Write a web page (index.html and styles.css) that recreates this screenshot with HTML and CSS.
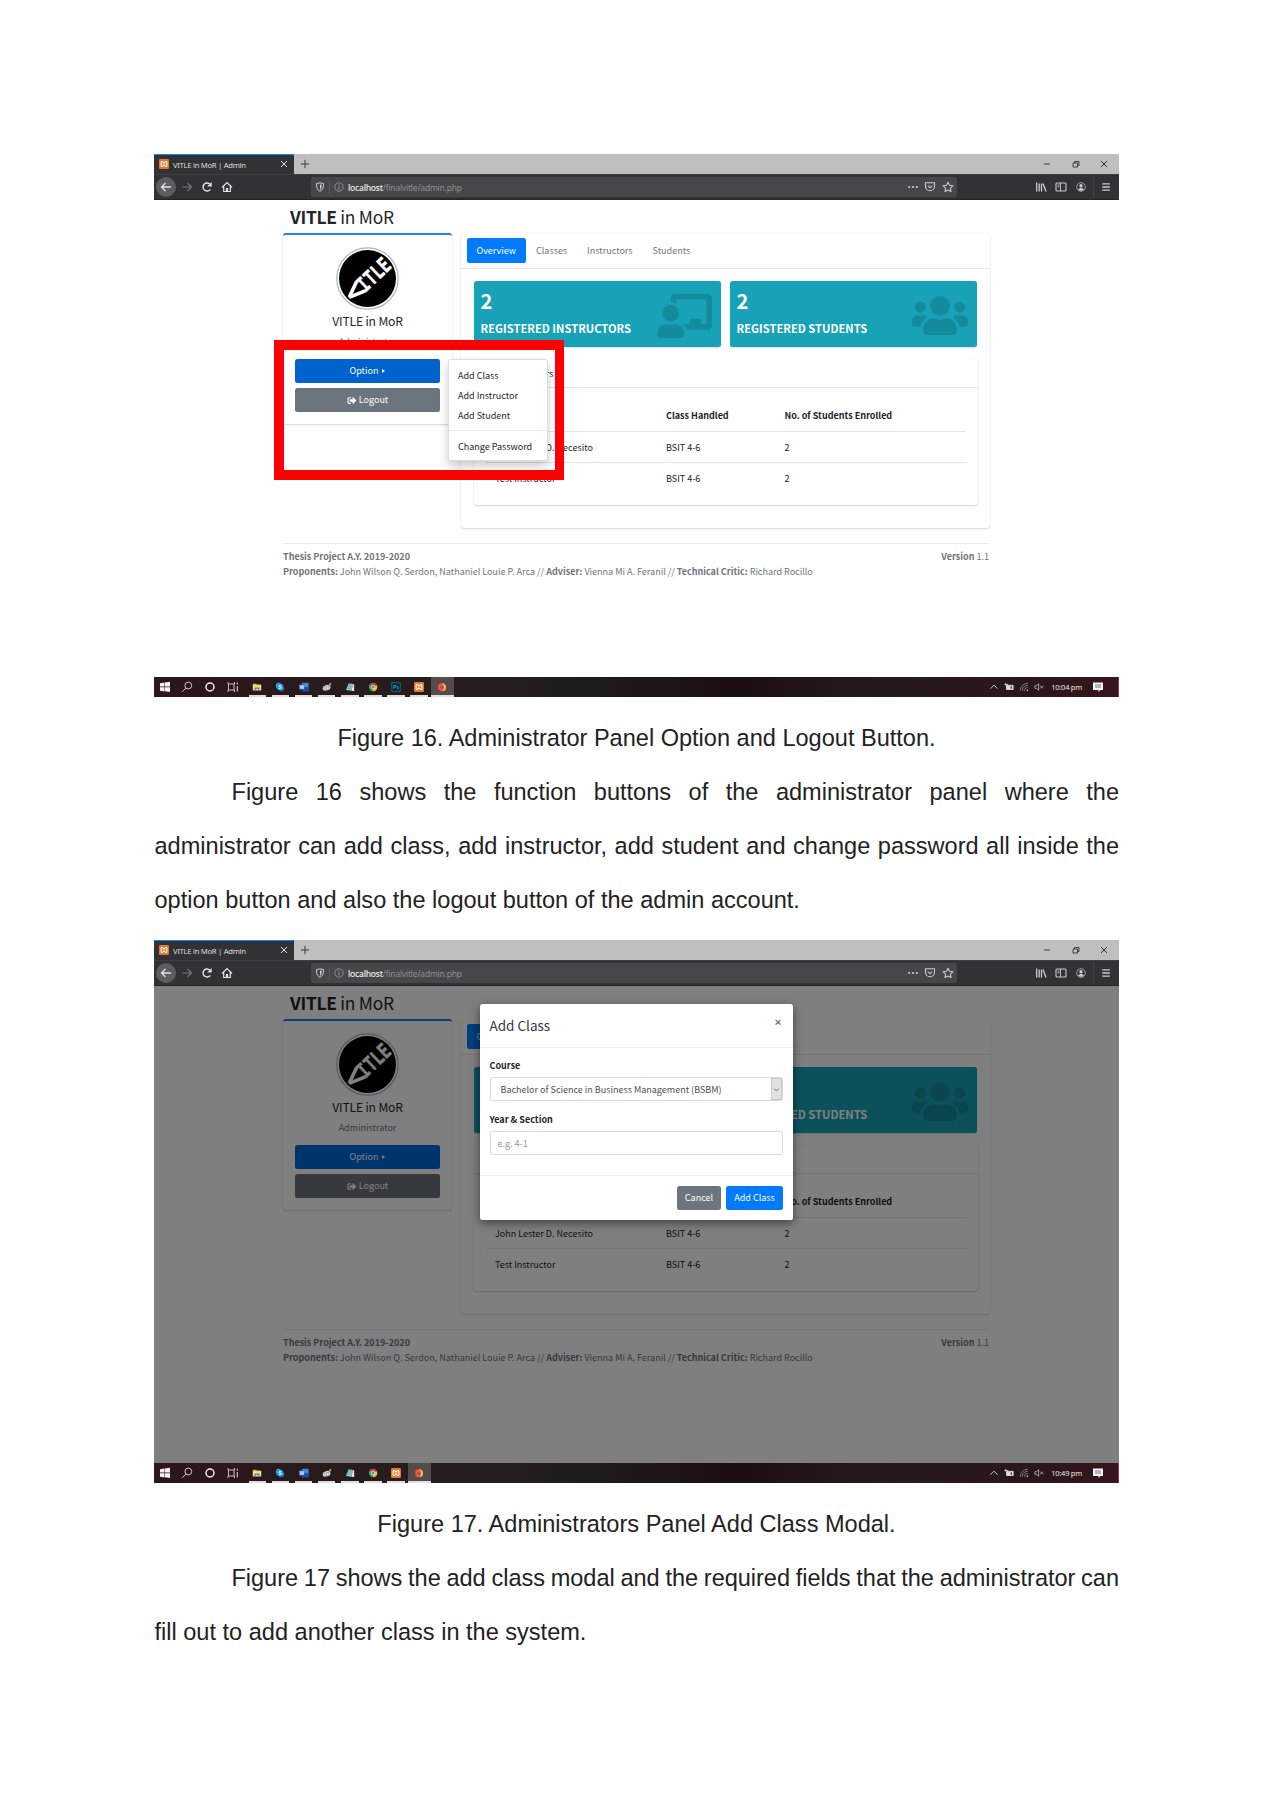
FILE: index.html
```html
<!DOCTYPE html>
<html lang="en">
<head>
<meta charset="utf-8">
<title>Administrator Panel</title>
<link rel="stylesheet" href="styles.css">
</head>
<body>
<svg class="defs" aria-hidden="true">
  <symbol id="xampp" viewBox="0 0 10 10"><rect width="10" height="10" rx="1.2" fill="#e8772e"/><path d="M2.200 3.200c0-1 1.300-1 2 0l.8.9.8-.9c.7-1 2-1 2 0v3.600c0 1-1.300 1-2 0L5 5.900l-.8.9c-.7 1-2 1-2 0z" fill="none" stroke="#fff" stroke-width="1.100"/></symbol>
  <symbol id="close" viewBox="0 0 10 10"><path d="M2 2l6 6M8 2L2 8" fill="none" stroke="currentColor" stroke-width="1"/></symbol>
  <symbol id="plus" viewBox="0 0 10 10"><path d="M5 .8v8.400M.8 5h8.400" fill="none" stroke="#3c3c3c" stroke-width="1"/></symbol>
  <symbol id="min" viewBox="0 0 10 10"><path d="M2 5h6" stroke="#333" stroke-width=".9"/></symbol>
  <symbol id="restore" viewBox="0 0 10 10"><path d="M2 4h4.500v4H2zM3.500 4V2.500H8v4H6.500" fill="none" stroke="#333" stroke-width=".9"/></symbol>
  <symbol id="back" viewBox="0 0 12 12"><path d="M11 6H1.800M5.500 2L1.500 6l4 4" fill="none" stroke="#e4e4e4" stroke-width="1.300"/></symbol>
  <symbol id="fwd" viewBox="0 0 12 12"><path d="M1 6h9.200M6.500 2l4 4-4 4" fill="none" stroke="#77777a" stroke-width="1.200"/></symbol>
  <symbol id="reload" viewBox="0 0 12 12"><path d="M9.300 8.300A4 4 0 1 1 9 3.300" fill="none" stroke="#e4e4e4" stroke-width="1.400"/><path d="M10.700 1v4.500H6.200z" fill="#e4e4e4"/></symbol>
  <symbol id="home" viewBox="0 0 12 12"><path d="M1 6.500L6 1.500l5 5M2.700 5.500v5h6.600v-5" fill="none" stroke="#e4e4e4" stroke-width="1.200"/><path d="M4.900 7h2.200v3.500H4.900z" fill="#e4e4e4"/></symbol>
  <symbol id="shield" viewBox="0 0 10 10"><path d="M1.500 1.500Q5 .3 8.500 1.500C8.700 5.500 7.700 8 5 9.400 2.300 8 1.300 5.500 1.500 1.500z" fill="none" stroke="#ccc" stroke-width="1"/><path d="M5 2.500l1.800.3C6.800 5.500 6.300 6.800 5 7.800z" fill="#ccc"/></symbol>
  <symbol id="info" viewBox="0 0 10 10"><circle cx="5" cy="5" r="4.200" fill="none" stroke="#a0a0a2" stroke-width=".8"/><path d="M5 4.300v3.200M5 2.500v1" stroke="#a0a0a2" stroke-width="1"/></symbol>
  <symbol id="dots" viewBox="0 0 10 10"><circle cx="1.200" cy="5" r="1.100" fill="#ccc"/><circle cx="5" cy="5" r="1.100" fill="#ccc"/><circle cx="8.800" cy="5" r="1.100" fill="#ccc"/></symbol>
  <symbol id="pocket" viewBox="0 0 12 12"><path d="M1.500 1.800h9v3.500a4.500 4.500 0 0 1-9 0z" fill="none" stroke="#ccc" stroke-width="1.100"/><path d="M3.800 4.600L6 6.800l2.200-2.200" fill="none" stroke="#ccc" stroke-width="1.100"/></symbol>
  <symbol id="star" viewBox="0 0 12 12"><path d="M6 1.200l1.500 3.100 3.400.5-2.500 2.400.6 3.400L6 9l-3 1.600.6-3.400L1.100 4.800l3.400-.5z" fill="none" stroke="#ccc" stroke-width="1.100" stroke-linejoin="round"/></symbol>
  <symbol id="library" viewBox="0 0 12 12"><path d="M1.700 1.500v9M4.200 2.500v8M6.500 2.500v8M8 2.500l3 8" fill="none" stroke="#ccc" stroke-width="1.300"/></symbol>
  <symbol id="sidebar" viewBox="0 0 12 12"><rect x="1" y="2" width="10" height="8" rx="1" fill="none" stroke="#ccc" stroke-width="1.100"/><path d="M5.500 2v8M2.500 4h2M2.500 5.800h2" stroke="#ccc" stroke-width=".9"/></symbol>
  <symbol id="account" viewBox="0 0 12 12"><circle cx="6" cy="6" r="4.300" fill="none" stroke="#aaa" stroke-width=".9"/><circle cx="6" cy="4.700" r="1.700" fill="#ccc"/><path d="M3 8.500q3-3.500 6 0Q6 11 3 8.500z" fill="#ccc"/></symbol>
  <symbol id="menu" viewBox="0 0 10 10"><path d="M1.200 1.800h7.600M1.200 5h7.600M1.200 8.200h7.600" stroke="#ccc" stroke-width="1.300"/></symbol>
  <symbol id="logo" viewBox="0 0 63 63">
    <circle cx="31.500" cy="31.500" r="30.700" fill="#fff" stroke="#adb5bd" stroke-width="1.200"/>
    <circle cx="31.500" cy="31.500" r="28.500" fill="#000"/>
    <g transform="translate(12.500 51) rotate(-43.500)">
      <path d="M1 0L17-6.300M1 0L17 6.300" fill="none" stroke="#fff" stroke-width="3.600"/>
      <path d="M0 0l5-2.300v4.600z" fill="#fff"/>
      <text x="15.500" y="7.800" textLength="38" lengthAdjust="spacingAndGlyphs" class="logo-text">ITLE</text>
    </g>
  </symbol>
  <symbol id="teacher" viewBox="0 0 640 512"><path d="M208 352c-2.390 0-4.780.35-7.060 1.090C187.980 357.300 174.350 360 160 360c-14.350 0-27.980-2.700-40.950-6.910-2.280-.74-4.660-1.090-7.050-1.090C49.940 352-.33 402.480 0 464.620.14 490.880 21.730 512 48 512h224c26.270 0 47.860-21.120 48-47.380.33-62.140-49.940-112.620-112-112.620zm-48-32c53.020 0 96-42.980 96-96s-42.980-96-96-96-96 42.980-96 96 42.980 96 96 96zM592 0H208c-26.470 0-48 22.250-48 49.590V96c23.420 0 45.100 6.780 64 17.800V64h352v288h-64v-64H384v64h-76.240c19.100 16.690 33.120 38.730 39.690 64H592c26.470 0 48-22.250 48-49.590V49.590C640 22.250 618.470 0 592 0z"/></symbol>
  <symbol id="users" viewBox="0 0 640 512"><path d="M96 224c35.300 0 64-28.700 64-64s-28.700-64-64-64-64 28.700-64 64 28.700 64 64 64zm448 0c35.300 0 64-28.700 64-64s-28.700-64-64-64-64 28.700-64 64 28.700 64 64 64zm32 32h-64c-17.600 0-33.500 7.100-45.100 18.600 40.300 22.100 68.900 62 75.100 109.400h66c17.700 0 32-14.300 32-32v-32c0-35.300-28.700-64-64-64zm-256 0c61.900 0 112-50.100 112-112S381.900 32 320 32 208 82.100 208 144s50.100 112 112 112zm76.800 32h-8.300c-20.800 10-43.900 16-68.500 16s-47.600-6-68.500-16h-8.300C179.600 288 128 339.600 128 403.200V432c0 26.500 21.500 48 48 48h288c26.500 0 48-21.500 48-48v-28.800c0-63.600-51.600-115.200-115.200-115.200zm-223.700-13.400C161.500 263.100 145.600 256 128 256H64c-35.300 0-64 28.700-64 64v32c0 17.700 14.300 32 32 32h65.900c6.300-47.400 34.900-87.300 75.200-109.400z"/></symbol>
  <symbol id="signout" viewBox="0 0 512 512"><path fill="currentColor" d="M497 273L329 441c-15 15-41 4.500-41-17v-96H152c-13.300 0-24-10.700-24-24v-96c0-13.300 10.700-24 24-24h136V88c0-21.400 25.900-32 41-17l168 168c9.300 9.400 9.300 24.600 0 34zM192 436v-40c0-6.600-5.400-12-12-12H96c-17.700 0-32-14.300-32-32V160c0-17.700 14.300-32 32-32h84c6.600 0 12-5.400 12-12V76c0-6.600-5.400-12-12-12H96c-53 0-96 43-96 96v192c0 53 43 96 96 96h84c6.600 0 12-5.400 12-12z"/></symbol>
  <symbol id="win" viewBox="0 0 12 12"><path d="M1 2.300L5.500 1.600v4H1zM6 1.500L11 .8v4.800H6zM1 6.200h4.500v4.200L1 9.700zM6 6.200h5V11l-5-.7z" fill="#f4f4f4"/></symbol>
  <symbol id="search" viewBox="0 0 12 12"><circle cx="7.300" cy="4.500" r="3.400" fill="none" stroke="#ddd" stroke-width=".9"/><path d="M5 7L1.200 10.800" stroke="#ddd" stroke-width=".9"/></symbol>
  <symbol id="cortana" viewBox="0 0 12 12"><circle cx="6" cy="6" r="4" fill="none" stroke="#f0f0f0" stroke-width="1.500"/></symbol>
  <symbol id="taskview" viewBox="0 0 12 12"><path d="M1 1v2h6.500V1M1 11V9h6.500v2M1.500 3v6M7 3v6" fill="none" stroke="#d0d0d0" stroke-width=".9"/><path d="M10.300 1.500v2M10.300 5v5.500" stroke="#d0d0d0" stroke-width="1.100"/></symbol>
  <symbol id="folder" viewBox="0 0 12 12"><path d="M1 2h4l1 1h5v7H1z" fill="#e9b93a"/><path d="M1 4h10v6H1z" fill="#fbdc7a"/><path d="M3 6.500h6V10H7.500V8.500h-3V10H3z" fill="#3d8fd1"/></symbol>
  <symbol id="skype" viewBox="0 0 12 12"><circle cx="4.500" cy="4.500" r="3.500" fill="#28a8ea"/><circle cx="7.500" cy="7.500" r="3.500" fill="#0f78d4"/><circle cx="6" cy="6" r="4" fill="#1a9be3"/><text x="6" y="8.200" text-anchor="middle" class="glyph">S</text></symbol>
  <symbol id="word" viewBox="0 0 12 12"><rect x="3.500" y="1" width="8" height="10" fill="#3f8fe0"/><rect x="3.500" y="6" width="8" height="5" fill="#174ea6"/><rect x="0" y="3" width="7" height="6.500" fill="#1a57b5"/><text x="3.500" y="8.200" text-anchor="middle" class="glyph">W</text></symbol>
  <symbol id="paint" viewBox="0 0 12 12"><ellipse cx="5.500" cy="7" rx="4.800" ry="3.200" fill="#cfd6d8" transform="rotate(-20 5.500 7)"/><path d="M6 6l4-5 1.500 1L8 7z" fill="#b9a383"/><circle cx="3" cy="7" r=".8" fill="#4b8bbd"/><circle cx="5" cy="5.500" r=".7" fill="#6da05f"/><circle cx="5" cy="8.700" r=".7" fill="#555"/></symbol>
  <symbol id="notepad" viewBox="0 0 12 12"><path d="M4.500 1.500l5.500 1L7.500 10.500l-6.500-1z" fill="#8fc3d0"/><path d="M10 2.500l1 .8v7.500l-3.500-.3z" fill="#e4edf0"/><path d="M4.500 3.500l4 .7M4 5.500l4 .7M3 7.500l4 .7" stroke="#4c8795" stroke-width=".5"/></symbol>
  <symbol id="chrome" viewBox="0 0 12 12"><circle cx="6" cy="6" r="5" fill="#3aa757"/><path d="M6 6L1.700 3.500A5 5 0 0 1 10.500 4z" fill="#e33b2e"/><path d="M6 6l4.600-2.200A5 5 0 0 1 6 11z" fill="#fbc116"/><circle cx="6" cy="6" r="2.400" fill="#fff"/><circle cx="6" cy="6" r="1.800" fill="#4285f4"/></symbol>
  <symbol id="ps" viewBox="0 0 12 12"><rect x="1" y="1" width="10" height="10" fill="#0a2230" stroke="#14839b" stroke-width=".9"/><text x="6" y="8.400" text-anchor="middle" class="glyph ps">Ps</text></symbol>
  <symbol id="firefox" viewBox="0 0 12 12"><circle cx="6" cy="6.300" r="4.800" fill="#ff5a2b"/><path d="M6.500.8c3 1.500 4.500 3.500 4.300 6-.3 2.500-2.300 4-4 4.200C9 8.500 9 4.500 6.500.8z" fill="#ffc531"/><path d="M1.400 4.500C1.500 9 4 11 7 11c-4 .5-6.500-3-5.600-6.500z" fill="#e21f62"/><circle cx="5.800" cy="6.500" r="1.700" fill="#7543d8"/></symbol>
  <symbol id="caret" viewBox="0 0 12 12"><path d="M1.800 8L6 3.800 10.200 8" fill="none" stroke="#ddd" stroke-width="1.100"/></symbol>
  <symbol id="battery" viewBox="0 0 12 12"><path d="M3 4h8v5H3z" fill="#ddd" stroke="#ddd"/><path d="M.5 3h4.500M2 1.200v3" stroke="#ddd"/><path d="M8 5h1.500v3H8z" fill="#333"/></symbol>
  <symbol id="wifi" viewBox="0 0 12 12"><path d="M1.500 10.500A9 9 0 0 1 10.500 1.500M4 10.500a6.500 6.500 0 0 1 6.500-6.500M6.500 10.500A4 4 0 0 1 10.500 6.500" fill="none" stroke="#999" stroke-width=".9"/><circle cx="10" cy="10" r="1" fill="#ccc"/></symbol>
  <symbol id="volume" viewBox="0 0 12 12"><path d="M1 4.500h2L5.500 2v8L3 7.500H1z" fill="none" stroke="#ccc" stroke-width=".9"/><path d="M7.500 4.300l3.400 3.400M10.900 4.300L7.500 7.700" stroke="#ccc" stroke-width=".9"/></symbol>
  <symbol id="notify" viewBox="0 0 12 12"><path d="M1 1.500h10v7.500H8.500L6.500 11V9H1z" fill="#f6f6f6"/><path d="M3 4h6M3 6h6" stroke="#555" stroke-width=".8"/></symbol>
</svg>

<main class="page">
  <section class="shot">
    <div class="tabstrip">
      <div class="tab"><svg class="i10"><use href="#xampp"/></svg><span>VITLE in MoR | Admin</span><svg class="i10"><use href="#close"/></svg></div>
      <svg class="i10 newtab"><use href="#plus"/></svg>
      <div class="wincontrols"><svg class="i10"><use href="#min"/></svg><svg class="i10"><use href="#restore"/></svg><svg class="i10"><use href="#close"/></svg></div>
    </div>
    <div class="navbar">
      <div class="navbtns"><span class="backbtn"><svg class="i12"><use href="#back"/></svg></span><svg class="i12"><use href="#fwd"/></svg><svg class="i12"><use href="#reload"/></svg><svg class="i12"><use href="#home"/></svg></div>
      <div class="urlbar"><svg class="i10"><use href="#shield"/></svg><i class="sep"></i><svg class="i10"><use href="#info"/></svg><span class="url"><b>localhost</b>/finalvitle/admin.php</span><span class="urlicons"><svg class="i10"><use href="#dots"/></svg><svg class="i12"><use href="#pocket"/></svg><svg class="i12"><use href="#star"/></svg></span></div>
      <div class="tools"><svg class="i12"><use href="#library"/></svg><svg class="i12"><use href="#sidebar"/></svg><svg class="i12"><use href="#account"/></svg><i class="sep tall"></i><svg class="i10"><use href="#menu"/></svg></div>
    </div>
    <div class="viewport">
      <h1 class="brand"><b>VITLE</b> in MoR</h1>
      <div class="cols">
        <aside class="card profile">
          <svg class="avatar"><use href="#logo"/></svg>
          <div class="name">VITLE in MoR</div>
          <div class="role">Administrator</div>
          <div class="btn primary pressed">Option <i class="tri"></i></div>
          <div class="btn grey"><svg class="out"><use href="#signout"/></svg> Logout</div>
        </aside>
        <div class="card panel">
          <nav class="pills"><span class="pill on">Overview</span><span class="pill">Classes</span><span class="pill">Instructors</span><span class="pill">Students</span></nav>
          <div class="body">
            <div class="boxes">
              <div class="box"><div><b class="num">2</b><b class="lbl">REGISTERED INSTRUCTORS</b></div><svg class="teach"><use href="#teacher"/></svg></div>
              <div class="box"><div><b class="num">2</b><b class="lbl">REGISTERED STUDENTS</b></div><svg class="usr"><use href="#users"/></svg></div>
            </div>
            <div class="card inner">
              <div class="innerhead">Active Instructors</div>
              <div class="table">
                <div class="tr th"><span>Name</span><span>Class Handled</span><span>No. of Students Enrolled</span></div>
                <div class="tr"><span>John Lester D. Necesito</span><span>BSIT 4-6</span><span>2</span></div>
                <div class="tr"><span>Test Instructor</span><span>BSIT 4-6</span><span>2</span></div>
              </div>
            </div>
          </div>
        </div>
      </div>
      <footer class="foot">
        <div class="footrow"><b>Thesis Project A.Y. 2019-2020</b><span><b>Version</b> 1.1</span></div>
        <div class="credits"><b>Proponents:</b> John Wilson Q. Serdon, Nathaniel Louie P. Arca // <b>Adviser:</b> Vienna Mi A. Feranil // <b>Technical Critic:</b> Richard Rocillo</div>
      </footer>
      <div class="dropdown"><span>Add Class</span><span>Add Instructor</span><span>Add Student</span><hr><span>Change Password</span></div>
      <div class="highlight"></div>
    </div>
    <div class="taskbar">
      <svg class="i12"><use href="#win"/></svg><svg class="i12"><use href="#search"/></svg><svg class="i12"><use href="#cortana"/></svg><svg class="i12"><use href="#taskview"/></svg>
      <div class="apps"><span><svg class="i10"><use href="#folder"/></svg></span><span><svg class="i10"><use href="#skype"/></svg></span><span><svg class="i10"><use href="#word"/></svg></span><span><svg class="i10"><use href="#paint"/></svg></span><span><svg class="i10"><use href="#notepad"/></svg></span><span><svg class="i10"><use href="#chrome"/></svg></span><span><svg class="i10"><use href="#ps"/></svg></span><span><svg class="i10"><use href="#xampp"/></svg></span><span class="current"><svg class="i10"><use href="#firefox"/></svg></span></div>
      <div class="tray"><svg class="i10"><use href="#caret"/></svg><svg class="i10"><use href="#battery"/></svg><svg class="i10"><use href="#wifi"/></svg><svg class="i10"><use href="#volume"/></svg><span class="time">10:04 pm</span><svg class="i12"><use href="#notify"/></svg></div>
    </div>
  </section>

  <p class="caption">Figure 16. Administrator Panel Option and Logout Button.</p>
  <p class="para"><span class="full indent">Figure 16 shows the function buttons of the administrator panel where the</span><span class="full">administrator can add class, add instructor, add student and change password all inside the</span><span>option button and also the logout button of the admin account.</span></p>

  <section class="shot second">
    <div class="tabstrip">
      <div class="tab"><svg class="i10"><use href="#xampp"/></svg><span>VITLE in MoR | Admin</span><svg class="i10"><use href="#close"/></svg></div>
      <svg class="i10 newtab"><use href="#plus"/></svg>
      <div class="wincontrols"><svg class="i10"><use href="#min"/></svg><svg class="i10"><use href="#restore"/></svg><svg class="i10"><use href="#close"/></svg></div>
    </div>
    <div class="navbar">
      <div class="navbtns"><span class="backbtn"><svg class="i12"><use href="#back"/></svg></span><svg class="i12"><use href="#fwd"/></svg><svg class="i12"><use href="#reload"/></svg><svg class="i12"><use href="#home"/></svg></div>
      <div class="urlbar"><svg class="i10"><use href="#shield"/></svg><i class="sep"></i><svg class="i10"><use href="#info"/></svg><span class="url"><b>localhost</b>/finalvitle/admin.php</span><span class="urlicons"><svg class="i10"><use href="#dots"/></svg><svg class="i12"><use href="#pocket"/></svg><svg class="i12"><use href="#star"/></svg></span></div>
      <div class="tools"><svg class="i12"><use href="#library"/></svg><svg class="i12"><use href="#sidebar"/></svg><svg class="i12"><use href="#account"/></svg><i class="sep tall"></i><svg class="i10"><use href="#menu"/></svg></div>
    </div>
    <div class="viewport">
      <h1 class="brand"><b>VITLE</b> in MoR</h1>
      <div class="cols">
        <aside class="card profile">
          <svg class="avatar"><use href="#logo"/></svg>
          <div class="name">VITLE in MoR</div>
          <div class="role">Administrator</div>
          <div class="btn primary">Option <i class="tri"></i></div>
          <div class="btn grey"><svg class="out"><use href="#signout"/></svg> Logout</div>
        </aside>
        <div class="card panel">
          <nav class="pills"><span class="pill on">Overview</span><span class="pill">Classes</span><span class="pill">Instructors</span><span class="pill">Students</span></nav>
          <div class="body">
            <div class="boxes">
              <div class="box"><div><b class="num">2</b><b class="lbl">REGISTERED INSTRUCTORS</b></div><svg class="teach"><use href="#teacher"/></svg></div>
              <div class="box"><div><b class="num">2</b><b class="lbl">REGISTERED STUDENTS</b></div><svg class="usr"><use href="#users"/></svg></div>
            </div>
            <div class="card inner">
              <div class="innerhead">Active Instructors</div>
              <div class="table">
                <div class="tr th"><span>Name</span><span>Class Handled</span><span>No. of Students Enrolled</span></div>
                <div class="tr"><span>John Lester D. Necesito</span><span>BSIT 4-6</span><span>2</span></div>
                <div class="tr"><span>Test Instructor</span><span>BSIT 4-6</span><span>2</span></div>
              </div>
            </div>
          </div>
        </div>
      </div>
      <footer class="foot">
        <div class="footrow"><b>Thesis Project A.Y. 2019-2020</b><span><b>Version</b> 1.1</span></div>
        <div class="credits"><b>Proponents:</b> John Wilson Q. Serdon, Nathaniel Louie P. Arca // <b>Adviser:</b> Vienna Mi A. Feranil // <b>Technical Critic:</b> Richard Rocillo</div>
      </footer>
      <div class="backdrop">
        <div class="modal">
          <div class="mhead"><span>Add Class</span><b>×</b></div>
          <div class="mbody">
            <label>Course</label>
            <div class="field select"><span>Bachelor of Science in Business Management (BSBM)</span><i><svg viewBox="0 0 10 10"><path d="M2.500 4L5 6.500 7.500 4" fill="none" stroke="#555" stroke-width="1"/></svg></i></div>
            <label>Year &amp; Section</label>
            <div class="field input">e.g. 4-1</div>
          </div>
          <div class="mfoot"><span class="btn grey cancel">Cancel</span><span class="btn add">Add Class</span></div>
        </div>
      </div>
    </div>
    <div class="taskbar">
      <svg class="i12"><use href="#win"/></svg><svg class="i12"><use href="#search"/></svg><svg class="i12"><use href="#cortana"/></svg><svg class="i12"><use href="#taskview"/></svg>
      <div class="apps"><span><svg class="i10"><use href="#folder"/></svg></span><span><svg class="i10"><use href="#skype"/></svg></span><span><svg class="i10"><use href="#word"/></svg></span><span><svg class="i10"><use href="#paint"/></svg></span><span><svg class="i10"><use href="#notepad"/></svg></span><span><svg class="i10"><use href="#chrome"/></svg></span><span><svg class="i10"><use href="#xampp"/></svg></span><span class="current"><svg class="i10"><use href="#firefox"/></svg></span></div>
      <div class="tray"><svg class="i10"><use href="#caret"/></svg><svg class="i10"><use href="#battery"/></svg><svg class="i10"><use href="#wifi"/></svg><svg class="i10"><use href="#volume"/></svg><span class="time">10:49 pm</span><svg class="i12"><use href="#notify"/></svg></div>
    </div>
  </section>

  <p class="caption">Figure 17. Administrators Panel Add Class Modal.</p>
  <p class="para"><span class="full indent snug">Figure 17 shows the add class modal and the required fields that the administrator can</span><span>fill out to add another class in the system.</span></p>
</main>
</body>
</html>
```
FILE: styles.css
```css
* { box-sizing: border-box; }
body { margin: 0; background: #fff; }
svg { display: block; flex: none; }
.defs { position: absolute; width: 0; height: 0; }
.i10 { width: 10px; height: 10px; }
.i12 { width: 12px; height: 12px; }
.logo-text { font: bold 21px "DejaVu Sans Mono", monospace; fill: #fff; stroke: #fff; stroke-width: .5px; }
.glyph { font: bold 6px "Liberation Sans", sans-serif; fill: #fff; }
.glyph.ps { fill: #22a9c0; }

.page { width: 1272px; height: 1800px; padding: 154px 153px 0 154px; overflow: hidden; }

/* document text */
.caption, .para { margin: 0; font: 23.550px/54px "Liberation Sans", Arial, sans-serif; color: #222; white-space: nowrap; }
.caption { text-align: center; padding-top: 14px; }
.para { padding-left: .5px; }
.para span { display: block; }
.para .full { text-align-last: justify; }
.para .indent { padding-left: 77px; }
.para .snug { word-spacing: -1.500px; letter-spacing: -.03px; }

/* browser window frame */
.shot { width: 965px; height: 543px; display: flex; flex-direction: column; font: 9.030px/14px "Noto Sans CJK JP", "Noto Sans", sans-serif; color: #212529; white-space: nowrap; }
.second { margin-top: 13px; }

.tabstrip { height: 20px; background: #bfbfbf; display: flex; align-items: center; color: #333; }
.tab { width: 140px; height: 20px; background: #323234; border-top: 1px solid #0a84ff; display: flex; align-items: center; gap: 4px; padding: 0 5px; font: 7.700px/12px "Noto Sans", sans-serif; color: #ddd; letter-spacing: -.3px; }
.tab span { flex: 1; }
.tab > svg { position: relative; top: -.5px; }
.newtab { margin-left: 6px; }
.wincontrols { margin-left: auto; display: flex; gap: 18.500px; padding-right: 10px; }

.navbar { height: 26px; background: #323234; border-top: 1px solid #3f3f41; border-bottom: 1px solid #252526; display: flex; align-items: center; }
.navbtns { width: 157px; display: flex; align-items: center; gap: 8px; padding-left: 2px; }
.navbtns > svg:nth-child(2) { margin-left: -3px; }
.backbtn { width: 20px; height: 20px; border-radius: 50%; background: #5d5d5f; display: flex; align-items: center; justify-content: center; }
.urlbar { width: 646px; height: 20px; background: #474749; border-radius: 2px; display: flex; align-items: center; padding: 0 3px 0 4px; }
.sep { width: 1px; height: 13px; background: #5b5b5d; margin: 0 4px; }
.sep.tall { height: 22px; background: #414143; margin: 0 -1px 0 -2px; }
.url { margin-left: 4px; padding-top: 1px; font: 8.500px/14px "Noto Sans", sans-serif; color: #8f8f92; letter-spacing: -.22px; }
.url b { font-weight: 500; color: #f2f2f2; }
.urlicons { margin-left: auto; display: flex; align-items: center; gap: 6px; }
.tools { margin-left: auto; display: flex; align-items: center; gap: 8px; padding-right: 8px; }

.viewport { height: 477px; position: relative; background: #fff; }
.brand { margin: 0; height: 33px; padding-left: 136px; font-size: 17.400px; letter-spacing: -.28px; line-height: 33px; font-weight: 400; }
.cols { margin-left: 129px; display: flex; align-items: flex-start; gap: 9px; }
.card { background: #fff; border-radius: 3px; box-shadow: 0 0 1px rgba(0,0,0,.13), 0 1px 2px rgba(0,0,0,.16); }

.profile { width: 169px; height: 191px; border-top: 2px solid #2183e6; padding: 12px 12px 0; display: flex; flex-direction: column; align-items: center; }
.avatar { width: 63px; height: 63px; }
.name { font-size: 12.100px; letter-spacing: -.15px; line-height: 20px; margin-top: 1px; }
.role { color: #6c757d; line-height: 21px; }
.btn { height: 24px; border-radius: 2.500px; color: #fff; display: flex; align-items: center; justify-content: center; }
.profile .btn { width: 145px; white-space: pre; }
.primary { background: #0069d9; margin: 7px 0 5px; }
.pressed { background: #0062cc; }
.grey { background: #6c757d; }
.tri { border-left: 3px solid #fff; border-top: 2.500px solid transparent; border-bottom: 2.500px solid transparent; margin-left: 2px; }
.out { width: 10px; height: 9px; }

.panel { width: 528.500px; height: 295px; }
.pills { height: 36px; border-bottom: 1px solid #e4e6e8; display: flex; align-items: center; padding: 0 0 1px 5.500px; color: #6c757d; }
.pill { height: 25px; line-height: 26px; padding: 0 10px; border-radius: 2.500px; }
.pill.on { background: #007bff; color: #fff; }
.body { padding: 12px 12px 12px 12.500px; }
.boxes { display: flex; gap: 9px; height: 66px; }
.box { width: 247px; background: #17a2b8; border-radius: 2.500px; color: #fff; display: flex; justify-content: space-between; padding: 0 9px 0 7px; box-shadow: 0 1px 1px rgba(0,0,0,.12); }
.num { display: block; font-size: 20.200px; line-height: 24px; margin-top: 8px; }
.lbl { display: block; font-size: 11.200px; line-height: 14px; margin-top: 8px; }
.box svg { fill: #148a9d; }
.teach { width: 55px; height: 44px; margin-top: 13px; }
.usr { width: 56px; height: 45px; margin-top: 12px; }
.inner { height: 146px; margin-top: 12px; }
.innerhead { height: 29px; line-height: 30px; border-bottom: 1px solid #e4e6e8; width: 100%; padding-left: 7px; }
.table { padding: 12px; }
.tr { display: grid; grid-template-columns: 171px 118.500px 1fr; height: 31px; line-height: 31px; padding-left: 9.500px; }
.tr + .tr { border-top: 1px solid #e3e6e9; }
.th { font-weight: 700; line-height: 32px; }

.foot { margin: 15px 0 0 129px; width: 706px; border-top: 1px solid #e9ebed; padding-top: 5px; color: #6c757d; line-height: 15px; }
.footrow { display: flex; justify-content: space-between; }

/* overlays inside the page */
.dropdown { position: absolute; left: 293.500px; top: 159px; width: 100px; height: 102px; background: #fff; border-radius: 2.500px; border: 1px solid #dcdcdc; box-shadow: 0 5px 10px rgba(0,0,0,.2); padding-top: 6px; }
.dropdown span { display: block; line-height: 20.200px; padding-left: 9.500px; }
.dropdown hr { margin: 3px 0 6px; border: 0; border-top: 1px solid #e9ecef; }
.highlight { position: absolute; left: 119.500px; top: 140px; width: 290.500px; height: 140px; border: 10px solid #f00; border-right-width: 9px; }

.backdrop { position: absolute; inset: 0; background: rgba(0,0,0,.5); }
.modal { margin: 18px 0 0 326px; width: 313px; height: 216px; background: #fff; border-radius: 2.500px; box-shadow: 0 3px 10px rgba(0,0,0,.5); display: flex; flex-direction: column; }
.mhead { height: 44px; border-bottom: 1px solid #eceef0; padding: 0 10px 0 9.500px; display: flex; justify-content: space-between; color: #343a40; }
.mhead span { font-size: 13.500px; line-height: 43px; }
.mhead b { color: #777; font-size: 11px; line-height: 35px; width: 10px; text-align: center; font-family: "Liberation Sans", sans-serif; padding-top: 1px; }
.mbody { height: 128px; border-bottom: 1px solid #eceef0; padding: 11px 10px 0 9.500px; }
.mbody label { display: block; font-weight: 700; line-height: 14px; margin-bottom: 4px; }
.field { height: 24px; border: 1px solid #d5dadf; border-radius: 2.500px; line-height: 23px; color: #495057; display: flex; margin-bottom: 12px; }
.select span { flex: 1; padding-left: 10px; }
.select i { width: 11px; background: #e1e1e1; border: 1px solid #c8c8c8; display: flex; align-items: center; }
.input { padding-left: 7px; color: #939ba2; }
.mfoot { display: flex; justify-content: flex-end; gap: 5px; padding: 10px 10px 0 0; }
.cancel { width: 44px; }
.add { width: 57px; background: #007bff; }

.taskbar { height: 20px; background: linear-gradient(90deg, #2c151b, #261e1e 30%, #1f1b1d 45%, #1c0f13 60%, #241a1d 75%, #2a161b 92%, #3a141c); display: flex; align-items: center; padding-left: 4.500px; gap: 10.800px; border-right: 1px solid #6b4b52; }
.apps { display: flex; height: 20px; margin-left: -4px; }
.apps span { width: 23.150px; height: 20px; display: flex; flex-direction: column; align-items: center; padding-top: 5px; }
.apps span::after { content: ""; width: 17.500px; height: 2px; background: #e3dede; margin-top: 3px; }
.apps .current { background: #544b4d; }
.apps .current::after { width: 23px; }
.tray { margin-left: auto; display: flex; align-items: center; gap: 5px; padding-right: 14px; color: #e6e6e6; font: 7.500px/12px "Noto Sans", sans-serif; letter-spacing: -.25px; }
.time { margin: 0 5px 0 2px; }
```
